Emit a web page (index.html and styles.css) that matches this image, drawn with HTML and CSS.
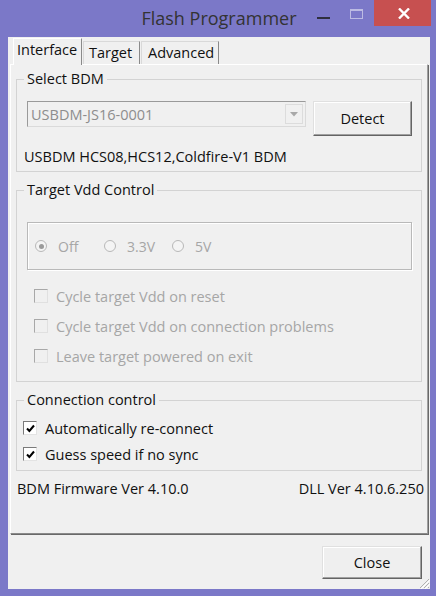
FILE: index.html
```html
<!DOCTYPE html>
<html>
<head>
<meta charset="utf-8">
<link rel="stylesheet" href="styles.css">
</head>
<body>
<div class="window">
  <div class="titlebar">
    <div></div>
    <div class="title">Flash Programmer</div>
    <div class="caption-btns">
      <div class="cap-min"><span></span></div>
      <div class="cap-max"><span></span></div>
      <div class="cap-close">
        <svg width="12" height="11" viewBox="0 0 12 11"><path d="M1 0.5 L11 10.5 M11 0.5 L1 10.5" stroke="#fff" stroke-width="2.4"/></svg>
      </div>
    </div>
  </div>
  <div class="client">
    <div class="tabs">
      <div class="tab active">Interface</div>
      <div class="tab">Target</div>
      <div class="tab">Advanced</div>
    </div>
    <div class="panel">
      <div class="group g1">
        <div class="legend">Select BDM</div>
        <div class="bdm-row">
          <div class="combo">
            <span class="combo-text">USBDM-JS16-0001</span>
            <span class="combo-arrow"><svg width="8" height="5" viewBox="0 0 8 5"><path d="M0 0 H8 L4 4.5 Z" fill="#a8a8a8"/></svg></span>
          </div>
          <div class="button detect">Detect</div>
        </div>
        <div class="desc">USBDM HCS08,HCS12,Coldfire-V1 BDM</div>
      </div>

      <div class="group g2">
        <div class="legend">Target Vdd Control</div>
        <div class="radio-box">
          <div class="radio-item r-off"><span class="radio checked"></span><span>Off</span></div>
          <div class="radio-item r-33"><span class="radio"></span><span>3.3V</span></div>
          <div class="radio-item r-5"><span class="radio"></span><span>5V</span></div>
        </div>
        <div class="check-list disabled">
          <div class="check-row"><span class="check"></span><span>Cycle target Vdd on reset</span></div>
          <div class="check-row"><span class="check"></span><span>Cycle target Vdd on connection problems</span></div>
          <div class="check-row"><span class="check"></span><span>Leave target powered on exit</span></div>
        </div>
      </div>

      <div class="group g3">
        <div class="legend">Connection control</div>
        <div class="check-list enabled">
          <div class="check-row"><span class="check on"><svg width="11" height="11" viewBox="0 0 11 11"><path d="M2 5.5 L4.4 8 L9 2.5" fill="none" stroke="#000" stroke-width="2"/></svg></span><span>Automatically re-connect</span></div>
          <div class="check-row"><span class="check on"><svg width="11" height="11" viewBox="0 0 11 11"><path d="M2 5.5 L4.4 8 L9 2.5" fill="none" stroke="#000" stroke-width="2"/></svg></span><span>Guess speed if no sync</span></div>
        </div>
      </div>

      <div class="footer-info">
        <span>BDM Firmware Ver 4.10.0</span>
        <span>DLL Ver 4.10.6.250</span>
      </div>
    </div>
    <div class="bottom-row">
      <div class="button close">Close</div>
    </div>
    <svg class="grip" width="12" height="12" viewBox="0 0 12 12">
      <path d="M11 2 L2 11 M11 6 L6 11 M11 10 L10 11" stroke="#b0b0b0" stroke-width="1"/>
      <path d="M12 3 L3 12 M12 7 L7 12" stroke="#fff" stroke-width="1"/>
    </svg>
  </div>
</div>
</body>
</html>
```

FILE: styles.css
```css
* { box-sizing: border-box; }
html, body { margin: 0; padding: 0; }
body {
  width: 436px;
  height: 596px;
  background: #7b78c8;
  font-family: "Open Sans", "Noto Sans", sans-serif;
  font-size: 14.5px;
  color: #111;
  overflow: hidden;
}
.window { width: 436px; height: 596px; display: flex; flex-direction: column; }

.titlebar {
  height: 37px;
  display: grid;
  grid-template-columns: 1fr auto 1fr;
  align-items: start;
}
.title {
  font-size: 18px;
  color: #333;
  line-height: 22px;
  padding-top: 7px;
  padding-left: 2px;
}
.caption-btns { display: flex; justify-content: flex-end; align-items: flex-start; padding-right: 5px; }
.cap-min { width: 13px; height: 26px; margin-right: 20px; }
.cap-min span { display: block; width: 13px; height: 2px; background: #2f2f3f; margin-top: 17px; }
.cap-max { width: 13px; height: 26px; margin-right: 11px; padding-top: 9px; }
.cap-max span { display: block; width: 13px; height: 10px; border: 1px solid #bcbbe3; border-top-width: 2px; }
.cap-close {
  width: 57px; height: 26px; background: #c75050;
  display: flex; align-items: center; justify-content: center;
  padding-left: 2px;
}

.client {
  position: relative;
  margin: 0 6px 0 8px;
  height: 552px;
  background: #f0f0f0;
  padding-top: 1px;
}
.tabs { display: flex; align-items: flex-end; height: 26px; margin-left: 5px; }
.tab {
  height: 23px;
  line-height: 21px;
  padding: 0 5px 0 5px;
  border: 1px solid #d9d9d9;
  border-right-color: #8a8a8a;
  border-bottom: none;
  background: #f0f0f0;
  color: #111;
  white-space: nowrap;
}
.tab + .tab { margin-left: 1px; }
.tab.active {
  height: 27px;
  margin-bottom: -1px;
  position: relative;
  z-index: 1;
  padding: 0 4px 0 3px;
  border-color: #fff;
  border-right-color: #8a8a8a;
  line-height: 22px;
}
.tabs .tab:nth-child(2) { width: 57px; padding-left: 5px; }
.tabs .tab:nth-child(3) { width: 78px; padding-left: 6px; }
.tabs .tab.active { width: 69px; }

.panel {
  margin: 0 2px;
  height: 470px;
  border: 1px solid;
  border-color: #fff #a0a0a0 #8a8a8a #fff;
  box-shadow: 1px 1px 0 #696969;
  padding: 0 5px;
  display: flex;
  flex-direction: column;
}

.group {
  border: 1px solid #d3d3d3;
  display: flex;
  flex-direction: column;
}
.legend {
  align-self: flex-start;
  margin: -10px 0 0 7px;
  padding: 0 3px;
  line-height: 18px;
  background: #f0f0f0;
  color: #111;
}
.g1 { margin-top: 14px; height: 93px; }
.g2 { margin-top: 18px; height: 192px; }
.g3 { margin-top: 18px; height: 71px; }

.bdm-row { display: flex; align-items: flex-start; margin-top: 13px; padding-left: 10px; }
.combo {
  width: 279px; height: 26px;
  border: 1px solid;
  border-color: #9a9a9a #dadada #dadada #9a9a9a;
  background: #f0f0f0;
  display: flex; align-items: center; justify-content: space-between;
  padding: 0 2px 0 3px;
  color: #8d8d8d;
}
.combo-arrow {
  width: 18px; height: 20px;
  border: 1px solid #dcdcdc;
  display: flex; align-items: center; justify-content: center;
}
.button {
  display: flex; align-items: center; justify-content: center;
  border: 1px solid;
  border-color: #e0e0e0 #646464 #646464 #e0e0e0;
  box-shadow: inset -1px -1px 0 #a0a0a0, inset 1px 1px 0 #fff;
  background: #efefef;
  color: #111;
}
.detect { width: 99px; height: 35px; margin-left: 7px; padding-bottom: 1px; }
.desc { margin-top: 12px; padding-left: 7px; line-height: 18px; }

.radio-box {
  margin: 23px 9px 0 10px;
  height: 48px;
  border: 1px solid #b9b9b9;
  box-shadow: inset 1px 1px 0 #fff, 1px 1px 0 #fff;
  display: flex;
  align-items: center;
  color: #a6a6a6;
  font-size: 14px;
}
.radio-item { display: flex; align-items: center; }
.radio-item .radio { margin-right: 11px; }
.r-off { margin-left: 7px; width: 69px; }
.r-33 { width: 68px; }
.r-5 { width: 60px; }
.radio {
  width: 12px; height: 12px; border-radius: 50%;
  border: 1px solid #b8b8b8;
  background: #f4f4f4;
  display: flex; align-items: center; justify-content: center;
  flex: none;
}
.radio.checked::after {
  content: ""; width: 5px; height: 5px; border-radius: 50%; background: #9a9a9a;
}

.check-list { display: flex; flex-direction: column; }
.check-list.disabled { margin-top: 11px; padding-left: 17px; color: #a6a6a6; }
.check-list.disabled .check-row { height: 30px; }
.check-list.enabled { margin-top: 6px; padding-left: 6px; }
.check-list.enabled .check-row { height: 26px; }
.check-row { display: flex; align-items: center; white-space: nowrap; }
.check {
  width: 14px; height: 14px;
  border: 1px solid;
  border-color: #a8a8a8 #e0e0e0 #e0e0e0 #a8a8a8;
  background: #f0f0f0;
  margin-right: 8px;
  display: flex; align-items: center; justify-content: center;
  flex: none;
}
.check.on {
  border-color: #7a7a7a #e3e3e3 #e3e3e3 #7a7a7a;
  background: #fff;
}

.footer-info {
  margin: 9px -5px 0 -5px;
  display: flex;
  justify-content: space-between;
  padding: 0 3px 0 6px;
  line-height: 18px;
}

.bottom-row { display: flex; justify-content: flex-end; padding: 12px 8px 0 0; }
.close { width: 100px; height: 33px; }

.grip { position: absolute; right: 0; bottom: 0; }
```
